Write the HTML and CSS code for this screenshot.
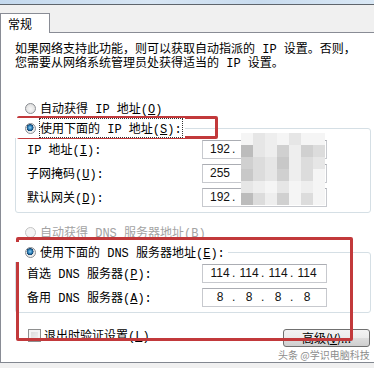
FILE: index.html
```html
<!DOCTYPE html>
<html lang="zh-CN">
<head>
<meta charset="utf-8">
<link rel="stylesheet" href="styles.css">
</head>
<body>
<div class="titlebar"></div>
<div class="tabbar"><div class="tab">常规</div></div>
<div class="panel">
  <p class="intro">如果网络支持此功能，则可以获取自动指派的 IP 设置。否则，<br>您需要从网络系统管理员处获得适当的 IP 设置。</p>

  <div class="opt first"><span class="radio"></span><span>自动获得 IP 地址(<u>O</u>)</span></div>
  <div class="opt legend"><span class="radio on"></span><span class="focus">使用下面的 IP 地址(<u>S</u>):</span></div>
  <div class="group">
    <div class="row"><span class="lbl">IP 地址(<u>I</u>):</span><div class="ip"><span class="seg">192</span><span class="dot">.</span></div></div>
    <div class="row"><span class="lbl">子网掩码(<u>U</u>):</span><div class="ip"><span class="seg">255</span></div></div>
    <div class="row"><span class="lbl">默认网关(<u>D</u>):</span><div class="ip"><span class="seg">192</span><span class="dot">.</span></div></div>
  </div>

  <div class="opt disabled second"><span class="radio off"></span><span>自动获得 DNS 服务器地址(<u>B</u>)</span></div>
  <div class="opt legend"><span class="radio on"></span><span>使用下面的 DNS 服务器地址(<u>E</u>):</span></div>
  <div class="group">
    <div class="row"><span class="lbl">首选 DNS 服务器(<u>P</u>):</span><div class="ip"><span class="seg">114</span><span class="dot">.</span><span class="seg">114</span><span class="dot">.</span><span class="seg">114</span><span class="dot">.</span><span class="seg">114</span></div></div>
    <div class="row"><span class="lbl">备用 DNS 服务器(<u>A</u>):</span><div class="ip"><span class="seg">8</span><span class="dot">.</span><span class="seg">8</span><span class="dot">.</span><span class="seg">8</span><span class="dot">.</span><span class="seg">8</span></div></div>
  </div>

  <div class="bottom">
    <div class="check"><span class="box"></span><span>退出时验证设置(<u>L</u>)</span></div>
    <div class="btn">高级(<u>V</u>)...</div>
  </div>
</div>

<div class="mosaic">
  <i class="a"></i><i class="c"></i><i class="b"></i><i class="a"></i><i class="c"></i><i class="a"></i><i class="a"></i>
  <i class="g"></i><i class="c"></i><i class="b"></i><i class="e"></i><i class="b"></i><i class="e"></i><i class="d"></i>
  <i class="e"></i><i class="d"></i><i class="c"></i><i class="f"></i><i class="b"></i><i class="d"></i><i class="c"></i>
  <i class="f"></i><i class="d"></i><i class="c"></i><i class="e"></i><i class="b"></i><i class="d"></i><i class="a"></i>
  <i class="c"></i><i class="b"></i><i class="a"></i><i class="c"></i><i class="a"></i><i class="b"></i><i class="a"></i>
  <i class="g"></i><i class="d"></i><i class="b"></i><i class="e"></i><i class="a"></i><i class="d"></i><i class="a"></i>
</div>

<div class="mark mark1"></div>
<div class="mark mark2"></div>
<div class="watermark">头条 @学识电脑科技</div>
</body>
</html>
```

FILE: styles.css
```css
html, body {
  margin: 0;
  padding: 0;
}
body {
  position: relative;
  width: 374px;
  height: 368px;
  overflow: hidden;
  background: #f0f0f0;
  font-family: "Liberation Mono", "Noto Sans CJK SC", monospace;
  font-size: 12px;
  color: #000;
}
u { text-decoration: underline; }

.titlebar {
  height: 4px;
  background: linear-gradient(90deg, #c4d9ee, #d8e6f4 40%, #c9dcef 70%, #dae8f5);
  border-bottom: 1px solid #5f656c;
}
.tabbar {
  height: 27px;
  display: flex;
  align-items: flex-end;
}
.tab {
  width: 50px;
  height: 20px;
  box-sizing: border-box;
  border: 1px solid #898c95;
  border-bottom: none;
  background: #fff;
  margin-bottom: -1px;
  position: relative;
  z-index: 1;
  padding-left: 7px;
  line-height: 19px;
  font-family: "Noto Sans CJK SC", sans-serif;
  font-size: 12px;
}
.panel {
  height: 329px;
  background: #fff;
  border-top: 1px solid #898c95;
  border-left: 1px solid #898c95;
  border-bottom: 1px solid #828790;
}
.intro {
  margin: 0;
  padding: 10px 0 0 14px;
  line-height: 14px;
  white-space: nowrap;
}

.opt {
  display: flex;
  align-items: center;
  height: 20px;
  padding-left: 24px;
  gap: 4px;
  white-space: nowrap;
}
.opt.first { margin-top: 27px; }
.opt.second { margin-top: 9px; }
.opt.legend {
  width: fit-content;
  padding-right: 3px;
  background: #fff;
  position: relative;
  z-index: 1;
}
.opt.disabled { color: #a3a3a3; }
.focus { outline: 1px dotted #333; outline-offset: 0; }

.radio {
  width: 11px;
  height: 11px;
  border-radius: 50%;
  box-sizing: border-box;
  border: 1px solid #8a8d92;
  background: radial-gradient(circle at 50% 55%, #f7f7f7 0%, #e4e4e4 60%, #cfcfcf 100%);
  flex: none;
}
.radio.on {
  background:
    radial-gradient(circle at 45% 40%, #8fd0f4 0%, #2d7fb8 28%, #0f3f6a 45%, #e6e6e6 50%, #f4f4f4 75%, #d2d2d2 100%);
}
.radio.off {
  border-color: #c4c4c4;
  background: #f4f4f4;
}

.group {
  margin: -10px 3px 0 14px;
  border: 1px solid #d5dfe5;
  border-radius: 3px;
  padding: 8px 0 3px 11px;
}
.row {
  display: grid;
  grid-template-columns: 175px 125px;
  align-items: center;
  height: 24px;
  white-space: nowrap;
}
.ip {
  width: 125px;
  height: 19px;
  box-sizing: border-box;
  border: 1px solid #c7c9ce;
  border-top-color: #abadb3;
  background: #fff;
  display: flex;
  align-items: center;
  padding-left: 5px;
  font-family: "Liberation Sans", sans-serif;
  font-size: 12px;
  color: #111;
}
.seg {
  width: 24px;
  text-align: center;
}
.dot {
  width: 5px;
  text-align: left;
}

.bottom {
  margin-top: 14px;
  display: flex;
  justify-content: space-between;
  align-items: flex-start;
  padding: 0 4px 0 27px;
}
.check {
  display: flex;
  align-items: center;
  gap: 3px;
  height: 16px;
  white-space: nowrap;
}
.box {
  width: 13px;
  height: 13px;
  box-sizing: border-box;
  border: 1px solid #8e8f8f;
  background: linear-gradient(135deg, #d6d6d6, #f6f6f6);
  box-shadow: inset 0 0 0 2px #f4f4f4;
}
.btn {
  margin-top: 2px;
  width: 87px;
  height: 18px;
  box-sizing: border-box;
  border: 1px solid #707070;
  border-radius: 3px;
  background: linear-gradient(#f3f3f3 0%, #ebebeb 50%, #dddddd 51%, #cfcfcf 100%);
  text-align: center;
  line-height: 13px;
  padding-top: 1px;
  font-family: "Noto Sans CJK SC", sans-serif;
  font-size: 12px;
}

.mosaic {
  position: absolute;
  left: 241px;
  top: 133px;
  display: grid;
  grid-template-columns: repeat(7, 12px);
  grid-auto-rows: 12px;
}
.mosaic i { display: block; }
.mosaic .a { background: #f5f5f5; }
.mosaic .b { background: #eeeeee; }
.mosaic .c { background: #e6e6e6; }
.mosaic .d { background: #dcdcdc; }
.mosaic .e { background: #d0d0d0; }
.mosaic .f { background: #c8c8c8; }
.mosaic .g { background: #bcbcbc; }

.mark {
  position: absolute;
  border: 3px solid #c2393b;
  border-radius: 2px;
  box-sizing: border-box;
}
.mark1 { left: 17px; top: 116px; width: 201px; height: 23px; }
.mark2 { left: 16px; top: 237px; width: 337px; height: 104px; }

.watermark {
  position: absolute;
  left: 278px;
  top: 349px;
  font-family: "Noto Sans CJK SC", sans-serif;
  font-size: 10px;
  line-height: 12px;
  color: #8d8d8d;
  white-space: nowrap;
  text-shadow: 0 0 1px #fff;
}
```
